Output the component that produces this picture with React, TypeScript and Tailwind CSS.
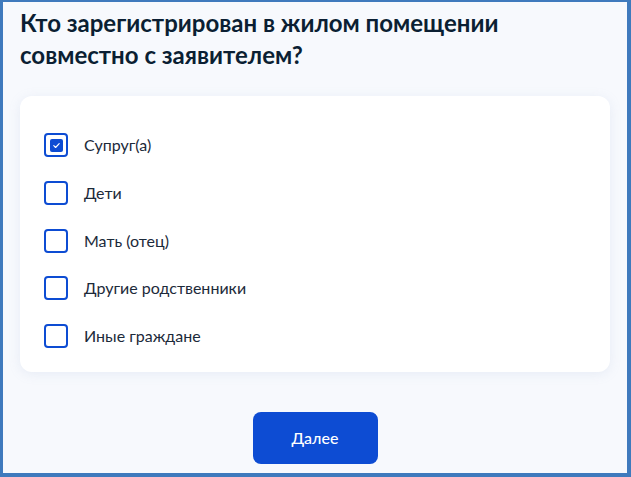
import React from "react";

const items = [
  { label: "Супруг(а)", checked: true },
  { label: "Дети", checked: false },
  { label: "Мать (отец)", checked: false },
  { label: "Другие родственники", checked: false },
  { label: "Иные граждане", checked: false },
];

function Box({ checked }: { checked: boolean }) {
  return (
    <div className="w-[24px] h-[24px] shrink-0 rounded-[4px] border-2 border-[#0d4cd3] bg-white flex items-center justify-center">
      {checked && (
        <div className="w-[13px] h-[13px] rounded-[2px] bg-[#0d4cd3] flex items-center justify-center">
          <svg width="9" height="9" viewBox="0 0 10 10" fill="none">
            <path d="M2 5.2l2 2 4-4.2" stroke="#fff" strokeWidth="1.3" strokeLinecap="round" strokeLinejoin="round" />
          </svg>
        </div>
      )}
    </div>
  );
}

export default function App() {
  return (
    <div
      className="w-[631px] h-[477px] border-l-[3px] border-t-[2px] border-r-[4px] border-b-[4px] border-[#3f7abd] bg-[#f7f9fd] flex flex-col px-[17px]"
      style={{ fontFamily: "Lato, 'Noto Sans', sans-serif" }}
    >
      <h1 className="mt-[5px] text-[24px] leading-[32px] font-bold text-[#0b1f33]">
        Кто зарегистрирован в жилом помещении
        <br />
        совместно с заявителем?
      </h1>
      <div className="mt-[25px] h-[276px] rounded-[12px] bg-white shadow-[0_2px_12px_rgba(140,160,200,0.15)] pl-[24px] pt-[37px] flex flex-col gap-[23.75px]">
        {items.map((it) => (
          <div key={it.label} className="flex items-center h-[24px]">
            <Box checked={it.checked} />
            <span className="ml-[16px] text-[16px] text-[#1c2a3a]">{it.label}</span>
          </div>
        ))}
      </div>
      <div className="mt-[40px] flex justify-center">
        <button className="w-[125px] h-[52px] rounded-[8px] bg-[#0d4cd3] text-white text-[16px] font-medium">
          Далее
        </button>
      </div>
    </div>
  );
}
